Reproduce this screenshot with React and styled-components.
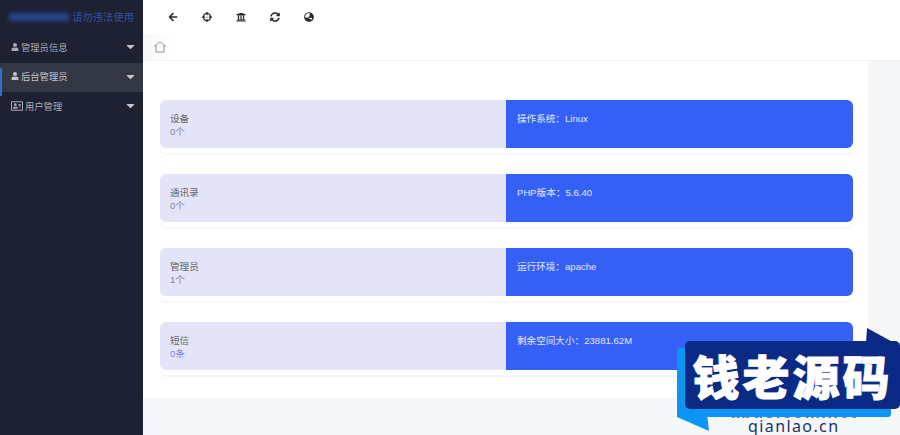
import React from 'react';
import styled, {createGlobalStyle} from 'styled-components';
import {FaArrowLeft, FaCrosshairs, FaUniversity, FaSyncAlt, FaGlobeAsia, FaUser, FaRegAddressCard, FaCaretDown} from 'react-icons/fa';

const GlobalStyle = createGlobalStyle`
    html, body {
        margin: 0;
        padding: 0;
        height: 100%;
        background: #f6f7f8;
        font-family: "Liberation Sans", "Noto Sans CJK SC", sans-serif;
        overflow: hidden;
    }
`

const Page = styled.div`
    position: relative;
    display: flex;
    width: 900px;
    height: 435px;
    overflow: hidden;
`

const Sidebar = styled.aside`
    flex: 0 0 143px;
    background: #1e2132;
    color: #a9abb3;
    font-size: 9.3px;
`

const Brand = styled.div`
    display: flex;
    align-items: center;
    justify-content: flex-end;
    gap: 3px;
    height: 33px;
    padding-right: 9px;
    color: #34529f;
    font-size: 10.3px;
`

const BlurredName = styled.span`
    width: 60px;
    height: 8px;
    background: #27468c;
    filter: blur(2px);
`

const MenuItem = styled.div`
    position: relative;
    display: flex;
    align-items: center;
    height: 29.5px;
    box-sizing: border-box;
    padding: 0 6px 2px 11px;
    gap: 2px;
    background: ${props => props.$active ? '#343744' : 'transparent'};
    color: ${props => props.$active ? '#c4c5ca' : '#a9abb3'};

    &::before {
        content: '';
        display: ${props => props.$active ? 'block' : 'none'};
        position: absolute;
        left: 0;
        top: 5px;
        width: 2px;
        height: 28px;
        background: #2f6fd0;
    }

    .caret {
        margin-left: auto;
        font-size: 13px;
        color: #c4c5ca;
    }
`

const Main = styled.main`
    flex: 1;
    display: flex;
    flex-direction: column;
    min-width: 0;
`

const Toolbar = styled.div`
    display: flex;
    align-items: center;
    gap: 24px;
    height: 34px;
    padding-left: 25px;
    background: #fff;
    color: #2b2b2b;
    font-size: 10px;
`

const TabBar = styled.div`
    display: flex;
    height: 27px;
    background: #fff;
    border-bottom: 1px solid #f2f2f2;
    box-sizing: border-box;
`

const HomeTab = styled.div`
    display: flex;
    align-items: center;
    justify-content: center;
    width: 34px;
    background: linear-gradient(90deg, #f7f7f7, #fff);
`

const Content = styled.section`
    width: 725px;
    height: 337px;
    box-sizing: border-box;
    padding: 39px 15px 0 17px;
    background: #fff;
    display: flex;
    flex-direction: column;
    gap: 26px;
`

const StatRow = styled.div`
    display: flex;
    height: 48px;
    border-radius: 6px;
    box-shadow: 0 5px 0 0 #fff, 0 7px 0 0 #f5f5fa;
`

const StatLeft = styled.div`
    flex: 0 0 346px;
    box-sizing: border-box;
    padding: 12px 10px;
    background: #e3e4f8;
    border-radius: 6px 0 0 6px;
    color: #666;
    font-size: 9.6px;
    line-height: 13px;
`

const StatCount = styled.div`
    color: ${props => props.$accent ? '#7c83cc' : '#80828f'};
`

const StatRight = styled.div`
    flex: 1;
    box-sizing: border-box;
    padding: 12px 11px;
    background: #3560f5;
    border-radius: 0 6px 6px 0;
    color: #e3e9fc;
    font-size: 9.6px;
    line-height: 13px;
`

const Stamp = styled.div`
    position: absolute;
    left: 677px;
    top: 328px;
    width: 223px;
    height: 107px;
`

const StampGrey = styled.div`
    position: absolute;
    left: 53px;
    top: 89px;
    height: 3px;
    overflow: hidden;
    color: #77787d;
    font-size: 17px;
    font-weight: 700;
    line-height: 14px;
    letter-spacing: 1.5px;
    filter: blur(.7px);
    white-space: nowrap;

    span {
        display: block;
        margin-top: -11px;
    }
`

const StampBack = styled.div`
    position: absolute;
    left: 0;
    top: 20px;
    width: 214px;
    height: 69px;
    background: #0b95f4;
    border-radius: 3px;
`

const StampFront = styled.div`
    position: absolute;
    left: 8px;
    top: 13px;
    width: 215px;
    height: 68px;
    background: #0a2a86;
    border-radius: 5px;
    color: #fff;
    font-family: "Noto Sans CJK SC", sans-serif;
    font-weight: 900;
    font-size: 47px;
    line-height: 68px;
    letter-spacing: 3px;
    -webkit-text-stroke: 1px #fff;
    text-align: center;
    white-space: nowrap;
`

const StampTail = styled.svg`
    position: absolute;
    left: 0;
    top: 0;
    width: 223px;
    height: 107px;
`

const StampUrl = styled.div`
    position: absolute;
    left: 71px;
    top: 92px;
    color: #1b2f6e;
    font-family: "Noto Sans", sans-serif;
    font-size: 16px;
    letter-spacing: 1.4px;
    line-height: 13px;
`

const stats = [
    {name: '设备', count: '0个', info: '操作系统：Linux'},
    {name: '通讯录', count: '0个', info: 'PHP版本：5.6.40'},
    {name: '管理员', count: '1个', info: '运行环境：apache'},
    {name: '短信', count: '0条', info: '剩余空间大小：23881.62M', accent: true}
];

const App = () => (
    <Page>
        <GlobalStyle/>
        <Sidebar>
            <Brand><BlurredName/>请勿违法使用</Brand>
            <MenuItem><FaUser size={8}/>管理员信息<FaCaretDown className='caret'/></MenuItem>
            <MenuItem $active><FaUser size={8}/>后台管理员<FaCaretDown className='caret'/></MenuItem>
            <MenuItem><FaRegAddressCard size={12}/>用户管理<FaCaretDown className='caret'/></MenuItem>
        </Sidebar>
        <Main>
            <Toolbar>
                <FaArrowLeft/>
                <FaCrosshairs/>
                <FaUniversity/>
                <FaSyncAlt/>
                <FaGlobeAsia/>
            </Toolbar>
            <TabBar>
                <HomeTab>
                    <svg width='12' height='12' viewBox='0 0 12 12' fill='none' stroke='#777' strokeWidth='.8'>
                        <path d='M6 .8 L11.4 5 H10 V11 H2 V5 H.6 Z'/>
                    </svg>
                </HomeTab>
            </TabBar>
            <Content>
                {stats.map(s => (
                    <StatRow key={s.name}>
                        <StatLeft>
                            {s.name}
                            <StatCount $accent={s.accent}>{s.count}</StatCount>
                        </StatLeft>
                        <StatRight>{s.info}</StatRight>
                    </StatRow>
                ))}
            </Content>
        </Main>
        <Stamp>
            <StampGrey><span>abus.com.net</span></StampGrey>
            <StampBack/>
            <StampTail viewBox='0 0 223 107'>
                <path d='M0 80 L0 89 L32 103 L30 86 Z' fill='#0b95f4'/>
                <path d='M189 15 L190 0 L223 18 L223 30 Z' fill='#0a2a86'/>
            </StampTail>
            <StampFront>钱老源码</StampFront>
            <StampUrl>qianlao.cn</StampUrl>
        </Stamp>
    </Page>
);

export default App;
